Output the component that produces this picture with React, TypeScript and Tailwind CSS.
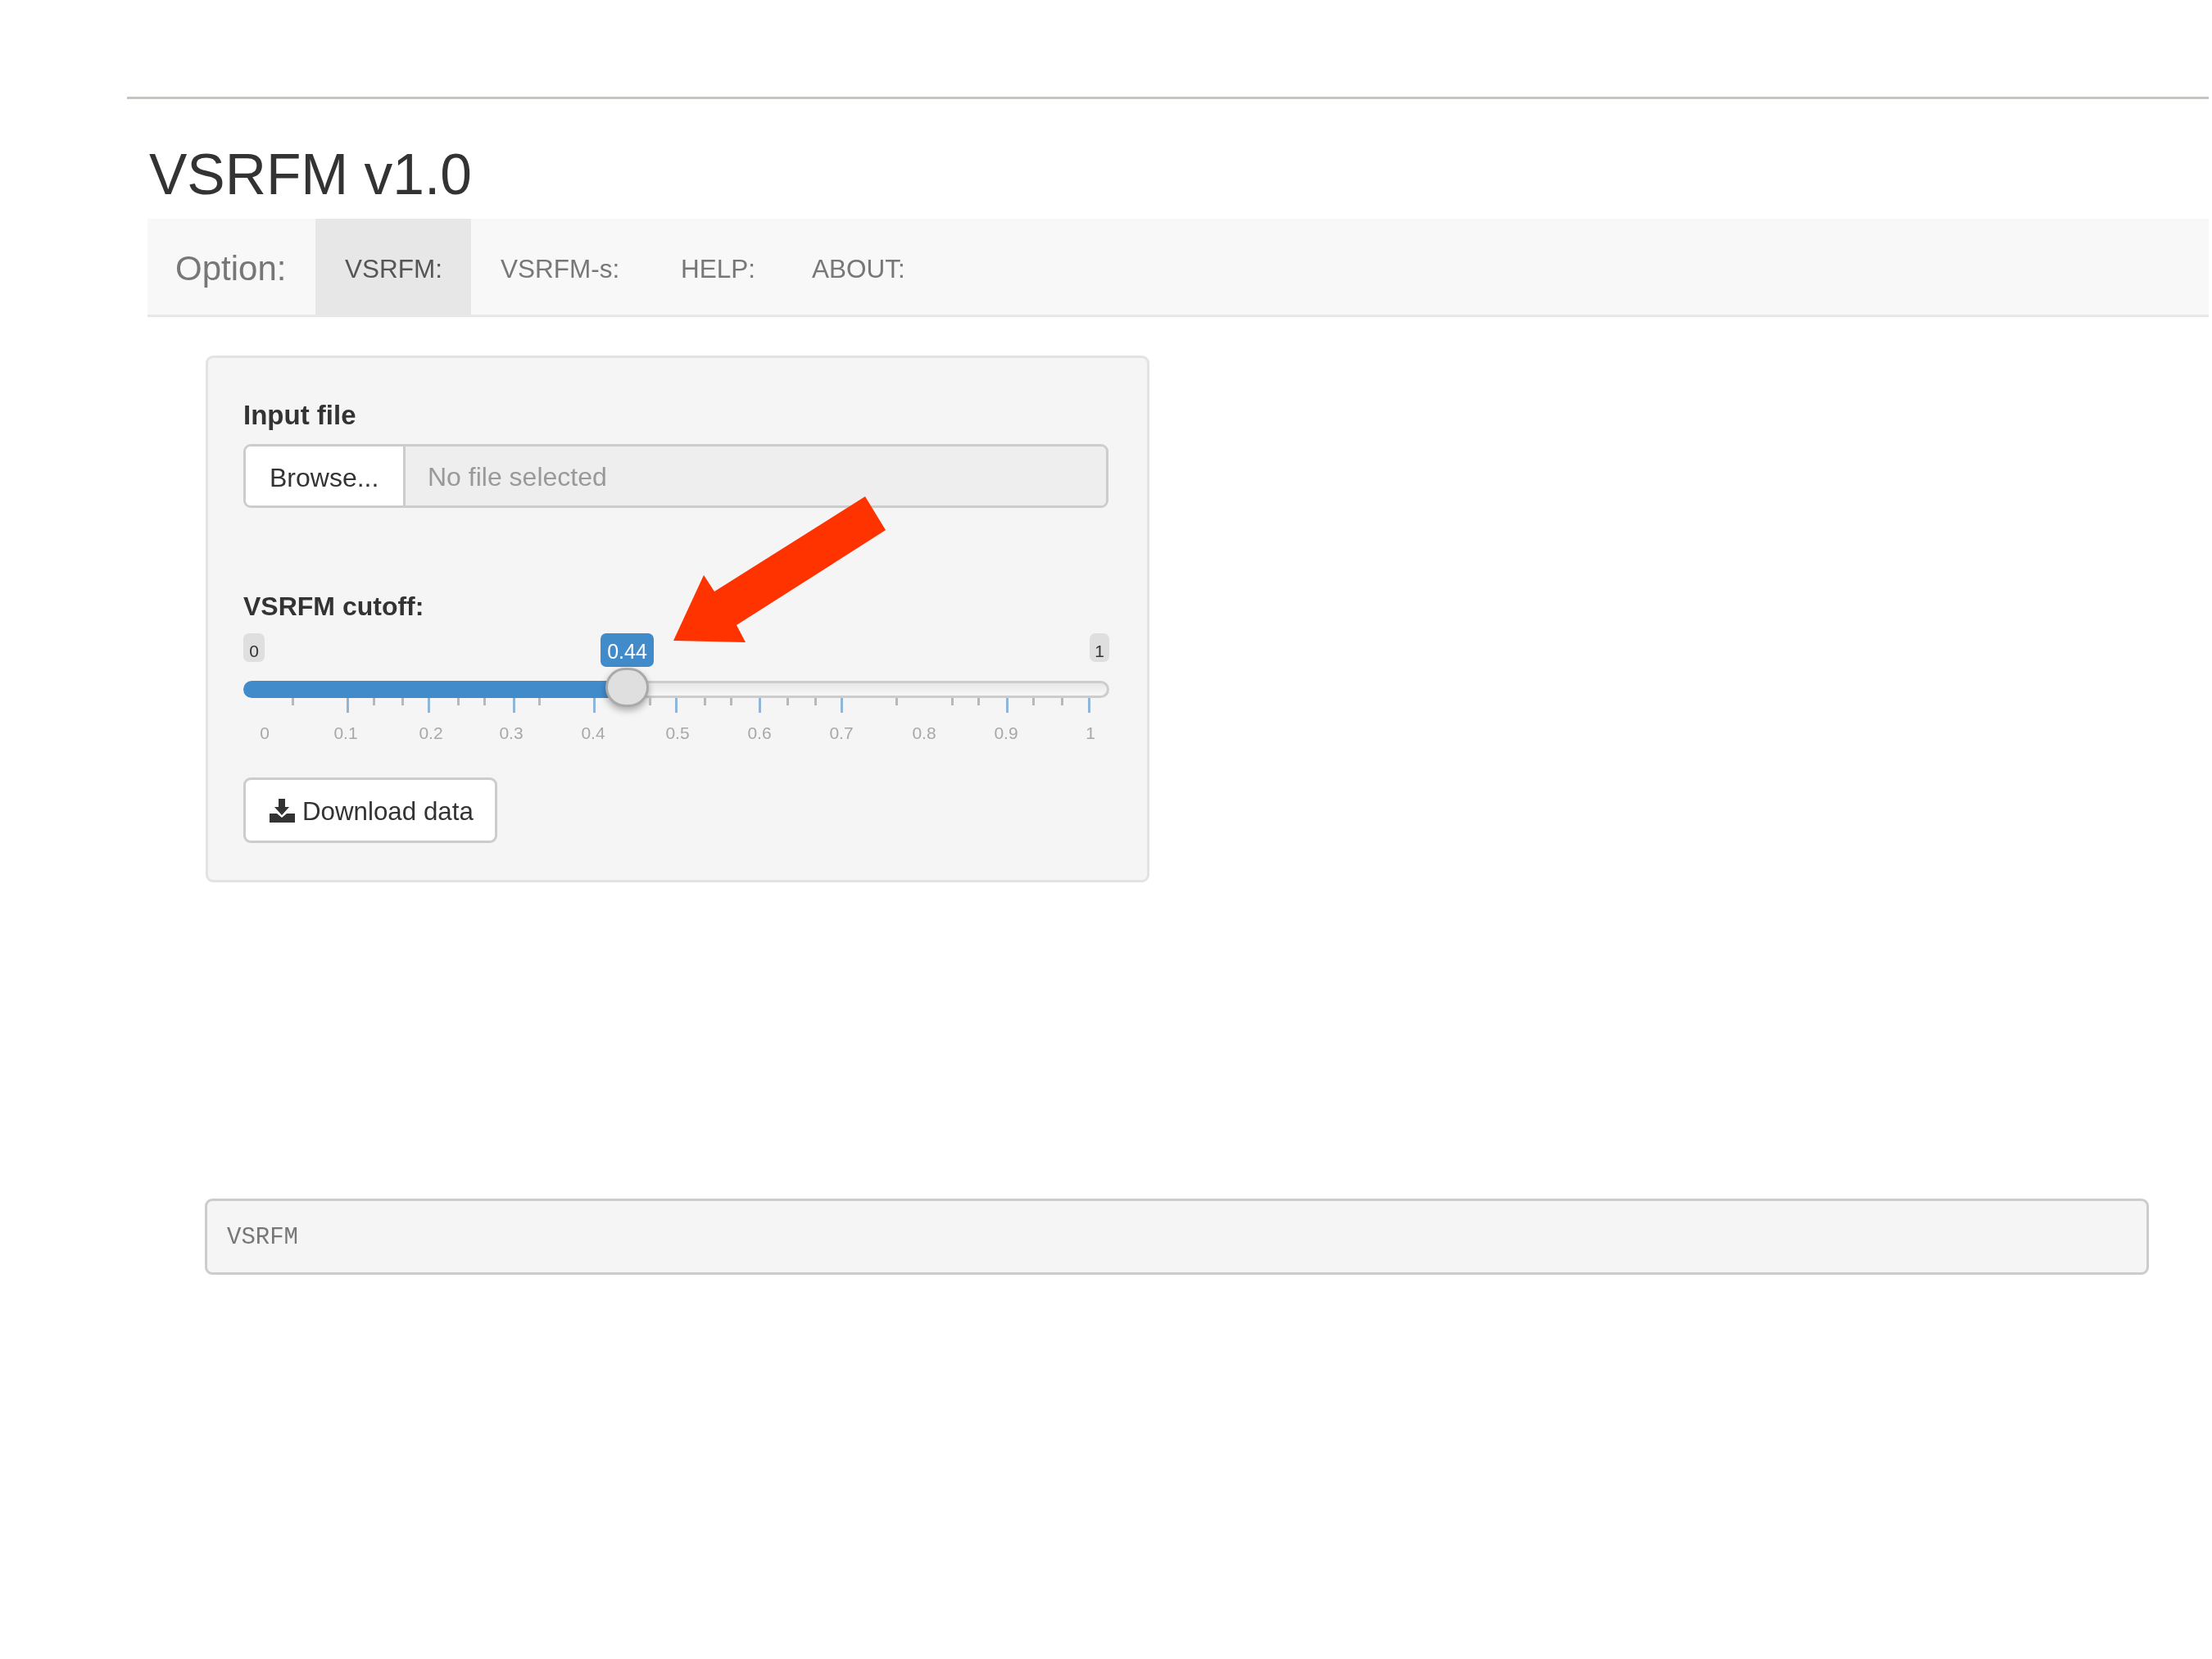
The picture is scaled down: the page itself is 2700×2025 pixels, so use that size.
import React from 'react';

const sans = "font-['Liberation_Sans',Arial,sans-serif]";

const navTabs = [
  { label: 'VSRFM:', width: 'w-[190px]', active: true },
  { label: 'VSRFM-s:', width: 'w-[220px]', active: false },
  { label: 'HELP:', width: 'w-[160px]', active: false },
  { label: 'ABOUT:', width: 'w-[185px]', active: false },
];

// tick x positions are page pixels read off the slider, offset from the grid's left edge
const gridLeft = 297;
const majorTicks = [424, 523, 627, 725, 825, 927, 1027, 1229, 1329];
const minorTicks = [357, 456, 491, 559, 591, 658, 793, 860, 892, 961, 995, 1094, 1162, 1194, 1261, 1296];
const tickLabels: [string, number][] = [
  ['0', 323],
  ['0.1', 422],
  ['0.2', 526],
  ['0.3', 624],
  ['0.4', 724],
  ['0.5', 827],
  ['0.6', 927],
  ['0.7', 1027],
  ['0.8', 1128],
  ['0.9', 1228],
  ['1', 1331],
];

const Slider: React.FC = () => (
  <div className="pt-[10px] pb-[41px] pr-[3px]">
    <div className="flex items-start h-[41px]">
      <span className="w-[26px] h-[35px] rounded-[7px] bg-[#dfdfdf] text-[#333] text-[21px] leading-[44px] text-center">0</span>
      <span className="ml-[410px] w-[65px] h-[41px] rounded-[7px] bg-[#428bca] text-white text-[25px] leading-[44px] text-center">0.44</span>
      <span className="ml-auto w-[24px] h-[35px] rounded-[7px] bg-[#dfdfdf] text-[#333] text-[21px] leading-[44px] text-center">1</span>
    </div>

    <div className="relative mt-[17px] flex h-[21px]">
      <div className="w-[460px] rounded-l-full bg-[#428bca]" />
      <div className="flex-1 rounded-r-full border-y-[3px] border-r-[3px] border-[#ccc] bg-gradient-to-b from-[#e8e8e8] to-[#f7f7f7]" />
      <div className="absolute left-[442px] top-[-16px] w-[53px] h-[48px] rounded-full border-[3px] border-[#aaa] bg-[#dfdfdf] shadow-[0_4px_8px_rgba(0,0,0,0.3)]" />
    </div>

    <div className="relative h-[30px]">
      {minorTicks.map(x => (
        <i key={x} className="absolute top-0 w-[3px] h-[9px] bg-[#b8b8b8]" style={{ left: x - gridLeft - 1 }} />
      ))}
      {majorTicks.map(x => (
        <i key={x} className="absolute top-0 w-[3px] h-[18px] bg-[#8fb5d8]" style={{ left: x - gridLeft - 1 }} />
      ))}
    </div>

    <div className="relative h-[26px]">
      {tickLabels.map(([label, x]) => (
        <span
          key={label}
          className="absolute top-0 w-[60px] -ml-[30px] text-center text-[21px] leading-[26px] text-[#a8a8a8]"
          style={{ left: x - gridLeft }}
        >
          {label}
        </span>
      ))}
    </div>
  </div>
);

const App: React.FC = () => (
  <div className={`relative min-h-[2025px] bg-white overflow-hidden blur-[0.6px] ${sans}`}>
    <div className="ml-[155px] mr-[4px] pt-[118px]">
      <div className="h-[3px] bg-[#c4c4c0]" />
    </div>

    <h2 className="ml-[182px] mt-[54px] h-[92px] text-[69.5px] leading-[77px] font-normal text-[#333]">VSRFM v1.0</h2>

    <nav className="ml-[180px] mr-[4px] h-[120px] flex bg-[#f8f8f8] border-b-[3px] border-[#e7e7e7]">
      <span className="w-[205px] pl-[34px] text-[42px] leading-[122px] text-[#777]">Option:</span>
      {navTabs.map(tab => (
        <a
          key={tab.label}
          className={`${tab.width} pl-[36px] text-[31.5px] leading-[122px] ${tab.active ? 'bg-[#e7e7e7] text-[#555]' : 'text-[#777]'}`}
        >
          {tab.label}
        </a>
      ))}
    </nav>

    <section className="ml-[251px] mt-[47px] w-[1152px] rounded-[9px] border-[3px] border-[#e3e3e3] bg-[#f5f5f5] px-[43px] pt-[47px] pb-[45px]">
      <label className="block h-[46px] mb-[12px] text-[33px] leading-[46px] font-bold text-[#333]">Input file</label>
      <div className="flex h-[78px] w-[1056px] rounded-[9px] border-[3px] border-[#ccc] overflow-hidden">
        <button className="w-[195px] border-r-[3px] border-[#ccc] bg-white pl-[29px] pt-[3px] text-left text-[32px] text-[#333]">Browse...</button>
        <div className="flex-1 bg-[#eee] pl-[27px] text-[32px] leading-[75px] text-[#999]">No file selected</div>
      </div>

      <label className="block h-[46px] mt-[97px] text-[32px] leading-[46px] font-bold text-[#333]">VSRFM cutoff:</label>
      <Slider />

      <button className="flex items-center w-[310px] h-[80px] rounded-[9px] border-[3px] border-[#ccc] bg-white pl-[29px] text-[31.3px] text-[#333]">
        <svg viewBox="0 0 31 29" className="w-[31px] h-[29px] mr-[9px] shrink-0" fill="#333">
          <path d="M11 0h8v10h5l-9 10-9-10h5z" />
          <path d="M0 18h9l6 5 6-5h10v11H0z" />
        </svg>
        <span className="pt-[5px]">Download data</span>
      </button>
    </section>

    <pre className="ml-[250px] mr-[77px] mt-[386px] h-[93px] rounded-[9px] border-[3px] border-[#ccc] bg-[#f5f5f5] pl-[24px] font-['Liberation_Mono',monospace] text-[29px] leading-[89px] text-[#777]">VSRFM</pre>

    {/* red annotation arrow pasted over the slider */}
    <svg className="absolute left-0 top-0 pointer-events-none" width="1200" height="800" viewBox="0 0 1200 800">
      <polygon points="1056,606 1081,647 899,763 910,784 822,782 859,702 872,722" fill="#ff3300" />
    </svg>
  </div>
);

export default App;
